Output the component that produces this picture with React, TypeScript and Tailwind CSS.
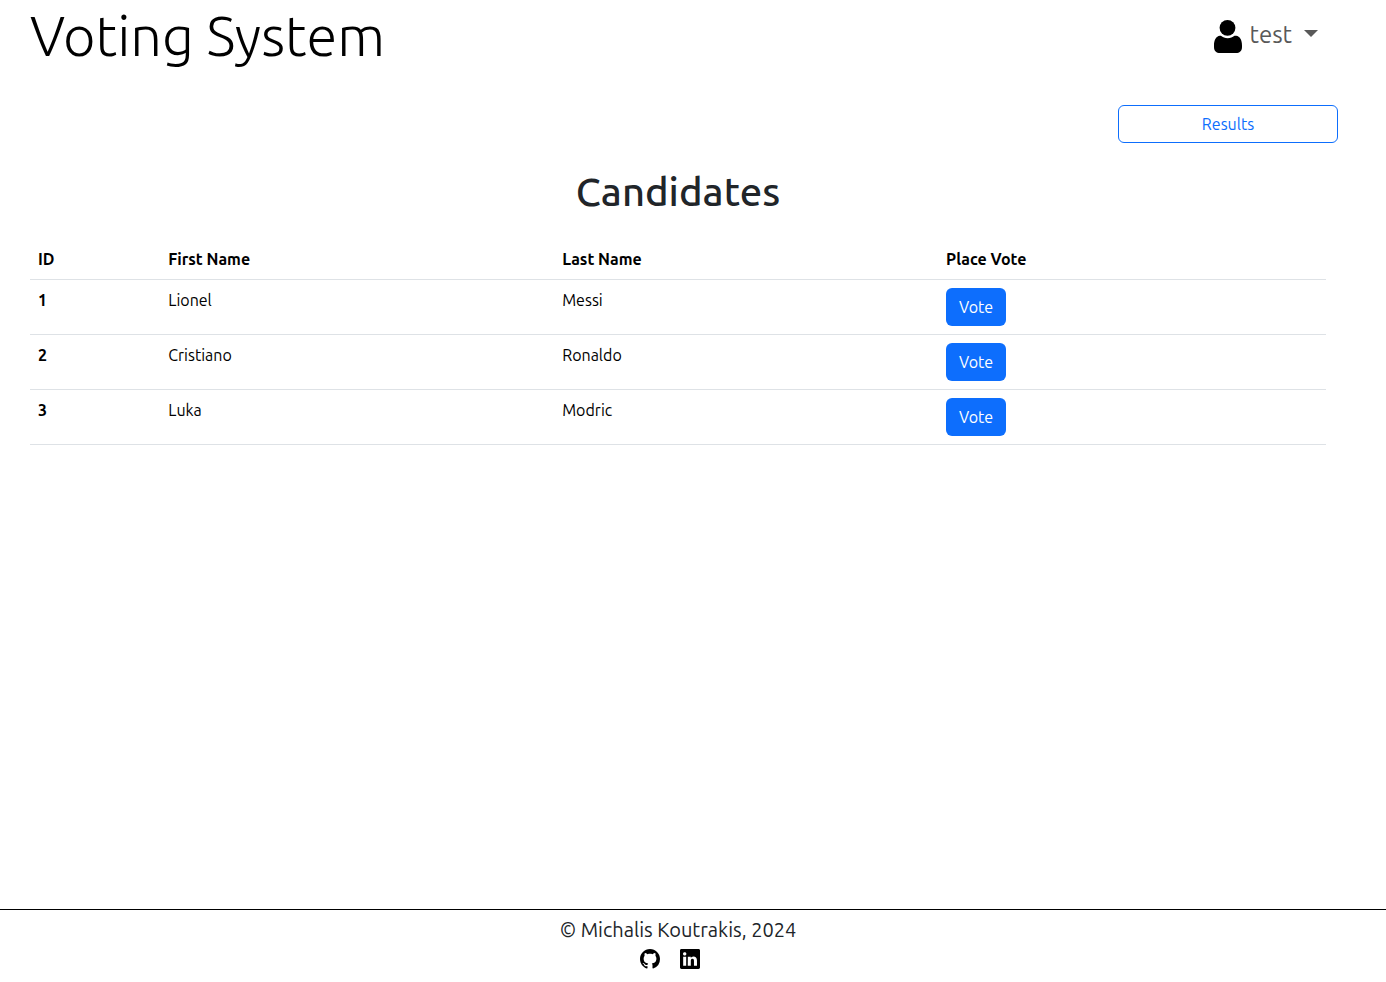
import { BsGithub, BsLinkedin } from "react-icons/bs";

type Candidate = { id: number; first: string; last: string };

const candidates: Candidate[] = [
  { id: 1, first: "Lionel", last: "Messi" },
  { id: 2, first: "Cristiano", last: "Ronaldo" },
  { id: 3, first: "Luka", last: "Modric" },
];

function UserIcon() {
  return (
    <svg viewBox="0 0 28 34" className="h-[34px] w-7" fill="currentColor" aria-hidden="true">
      <circle cx="13.500" cy="8.800" r="7.900" />
      <path d="M5.800 16.800C2.200 17.300 0 21 0 26.500v1.500C0 32 2.500 34 6 34h16c3.500 0 6-2 6-6v-1.500c0-5.500-2.200-9.200-5.800-9.700h-1.700C18.500 18.300 16.500 19.300 13.700 19.300S8.900 18.300 6.900 16.800Z" />
    </svg>
  );
}

function Header() {
  return (
    <header className="flex items-start justify-between pr-[68px] pl-[30px]">
      <h1 className="text-[56px] leading-[72px] font-light text-black">Voting System</h1>
      <button type="button" className="flex items-start pt-[19px] text-2xl leading-8 text-[#595959]">
        <span className="text-black"><UserIcon /></span>
        <span className="ml-2">test</span>
        <svg viewBox="0 0 14 7" className="mt-[11px] ml-3 h-[7px] w-[14px]" fill="currentColor" aria-hidden="true">
          <path d="M0 0h14L7 7Z" />
        </svg>
      </button>
    </header>
  );
}

function CandidateTable() {
  return (
    <table className="w-full table-fixed border-collapse text-left text-base leading-6 text-black">
      <colgroup>
        <col className="w-[10.050%]" />
        <col className="w-[30.400%]" />
        <col className="w-[29.620%]" />
        <col />
      </colgroup>
      <thead>
        <tr className="border-b border-[#dee2e6]">
          <th scope="col" className="p-2">ID</th>
          <th scope="col" className="p-2">First Name</th>
          <th scope="col" className="p-2">Last Name</th>
          <th scope="col" className="p-2">Place Vote</th>
        </tr>
      </thead>
      <tbody>
        {candidates.map((c) => (
          <tr key={c.id} className="border-b border-[#dee2e6] align-top">
            <th scope="row" className="p-2">{c.id}</th>
            <td className="p-2">{c.first}</td>
            <td className="p-2">{c.last}</td>
            <td className="p-2">
              <button type="button" aria-label={`Vote for ${c.first} ${c.last}`} className="block h-[38px] rounded-md bg-[#0d6efd] px-[13px] text-white">
                Vote
              </button>
            </td>
          </tr>
        ))}
      </tbody>
    </table>
  );
}

export default function App() {
  return (
    <div className="flex min-h-screen flex-col bg-white font-['Ubuntu','Noto_Sans',sans-serif] text-[#212529]">
      <Header />
      <main className="flex-1">
        <div className="flex justify-end pt-[33px] pr-12">
          <button type="button" className="h-[38px] w-[220px] rounded-md border border-[#0d6efd] text-base text-[#0d6efd]">
            Results
          </button>
        </div>
        <div className="pt-6 pr-[60px] pl-[30px]">
          <h2 className="mb-[22px] text-center text-[40px] leading-[50px] font-medium">Candidates</h2>
          <CandidateTable />
        </div>
      </main>
      <footer className="h-[73px] border-t border-black pt-1 pr-[30px] text-center">
        <p className="text-xl leading-8">© Michalis Koutrakis, 2024</p>
        <div className="mt-[3px] flex justify-center gap-5 pr-4 text-black">
          <a href="#github" aria-label="GitHub"><BsGithub size={20} /></a>
          <a href="#linkedin" aria-label="LinkedIn"><BsLinkedin size={20} /></a>
        </div>
      </footer>
    </div>
  );
}
